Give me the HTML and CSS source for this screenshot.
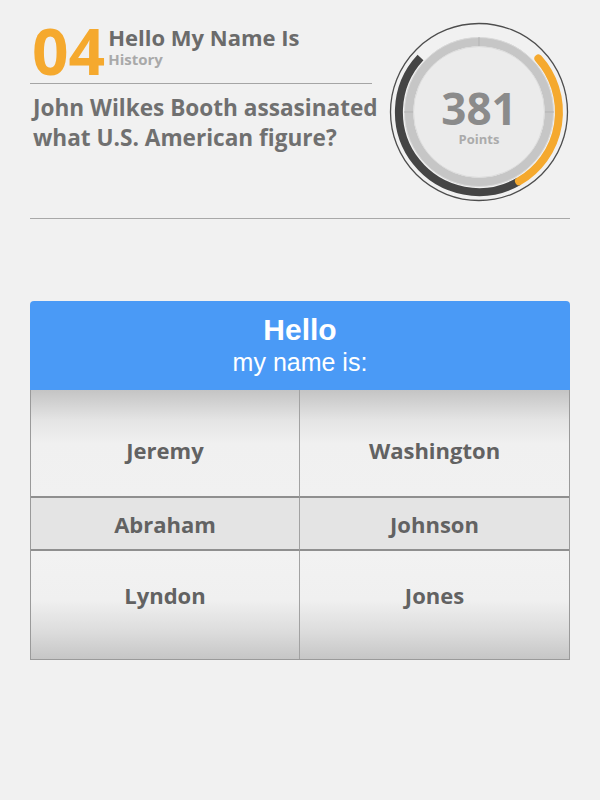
FILE: index.html
```html
<!DOCTYPE html>
<html>
<head>
<meta charset="utf-8">
<link rel="stylesheet" href="styles.css">
</head>
<body>
<div class="page">
  <header class="top">
    <div class="info">
      <div class="titlerow">
        <span class="num">04</span>
        <div class="titles">
          <div class="title">Hello My Name Is</div>
          <div class="cat">History</div>
        </div>
      </div>
      <div class="rule"></div>
      <p class="question">John Wilkes Booth assasinated what U.S. American figure?</p>
    </div>
    <svg class="gauge" width="180" height="180" viewBox="0 0 180 180">
      <circle cx="90" cy="90" r="88.5" fill="none" stroke="#4d4d4d" stroke-width="1.3"/>
      <path d="M31.5 35.4 A80 80 0 0 0 130 159.3" fill="none" stroke="#454545" stroke-width="8"/>
      <path d="M149.4 36.5 A80 80 0 0 1 130 159.3" fill="none" stroke="#f5a92e" stroke-width="8" stroke-linecap="round"/>
      <circle cx="90" cy="90" r="70" fill="none" stroke="#c6c6c6" stroke-width="9"/>
      <circle cx="90" cy="90" r="74.5" fill="none" stroke="#d9d9d9" stroke-width="1"/>
      <line x1="90" y1="15" x2="90" y2="25" stroke="#b3b3b3" stroke-width="1"/>
      <line x1="15" y1="90" x2="25" y2="90" stroke="#b3b3b3" stroke-width="1"/>
      <line x1="155" y1="90" x2="165" y2="90" stroke="#b3b3b3" stroke-width="1"/>
      <circle cx="90" cy="90" r="65.5" fill="#ebebeb" stroke="#dcdcdc" stroke-width="1"/>
      <text text-anchor="middle"><tspan x="90" y="103" class="pts">381</tspan><tspan x="90" y="122" class="ptslabel">Points</tspan></text>
    </svg>
  </header>
  <div class="divider"></div>
  <section class="card">
    <div class="cardhead">
      <div class="hello">Hello</div>
      <div class="sub">my name is:</div>
    </div>
    <div class="grid">
      <div class="cell top">Jeremy</div>
      <div class="cell top">Washington</div>
      <div class="cell mid">Abraham</div>
      <div class="cell mid">Johnson</div>
      <div class="cell bot">Lyndon</div>
      <div class="cell bot">Jones</div>
    </div>
  </section>
</div>
</body>
</html>
```

FILE: styles.css
```css
html, body {
  margin: 0;
  padding: 0;
  background: #f1f1f1;
}
.page {
  width: 600px;
  height: 800px;
  padding: 0 30px;
  box-sizing: border-box;
  font-family: "Open Sans", "Noto Sans", sans-serif;
}
.top {
  display: flex;
  align-items: flex-start;
  padding-top: 22px;
}
.info {
  width: 342px;
  padding-top: 2px;
}
.titlerow {
  display: flex;
  align-items: flex-start;
  gap: 3px;
  padding-left: 2px;
}
.num {
  font-size: 64px;
  font-weight: 700;
  line-height: 54px;
  color: #f5a92e;
}
.title {
  font-size: 22px;
  font-weight: 700;
  line-height: 27px;
  color: #6b6b6b;
}
.cat {
  font-size: 15px;
  font-weight: 700;
  line-height: 17px;
  color: #a9a9a9;
}
.rule {
  height: 1px;
  background: #a5a5a5;
  margin-top: 5px;
}
.question {
  margin: 9px 0 0 3px;
  font-size: 22.6px;
  font-weight: 700;
  line-height: 30px;
  color: #707070;
  width: 375px;
}
.gauge {
  margin-left: auto;
  margin-right: 1px;
  flex: none;
}
.pts {
  font-family: "Open Sans", sans-serif;
  font-size: 44px;
  font-weight: 700;
  fill: #8b8b8b;
}
.ptslabel {
  font-family: "Open Sans", sans-serif;
  font-size: 13px;
  font-weight: 700;
  fill: #ababab;
}
.divider {
  height: 1px;
  background: #a8a8a8;
  margin-top: 16px;
}
.card {
  margin-top: 82px;
}
.cardhead {
  background: #4a9af6;
  border-radius: 4px 4px 0 0;
  height: 89px;
  box-sizing: border-box;
  padding-top: 12px;
  text-align: center;
  color: #fff;
  font-family: "Liberation Sans", Arial, sans-serif;
}
.hello {
  font-size: 30px;
  font-weight: 700;
  line-height: 34px;
}
.sub {
  font-size: 25px;
  line-height: 30px;
}
.grid {
  display: grid;
  grid-template-columns: 1fr 1fr;
  grid-template-rows: 108px 53px 108px;
  border: 1px solid #9a9a9a;
  border-top: none;
}
.cell {
  display: flex;
  align-items: center;
  justify-content: center;
  font-size: 22px;
  font-weight: 700;
  color: #626262;
}
.cell:nth-child(odd) {
  border-right: 1px solid #a2a2a2;
}
.cell.top {
  background: linear-gradient(to bottom, #c4c4c4 0%, #e4e4e4 28%, #f0f0f0 50%, #f1f1f1 100%);
  border-bottom: 2px solid #8f8f8f;
  padding-top: 14px;
}
.cell.mid {
  background: #e4e4e4;
  border-bottom: 2px solid #8f8f8f;
}
.cell.bot {
  background: linear-gradient(to bottom, #f2f2f2 0%, #f0f0f0 45%, #dcdcdc 75%, #c6c6c6 100%);
  padding-bottom: 20px;
}
```
